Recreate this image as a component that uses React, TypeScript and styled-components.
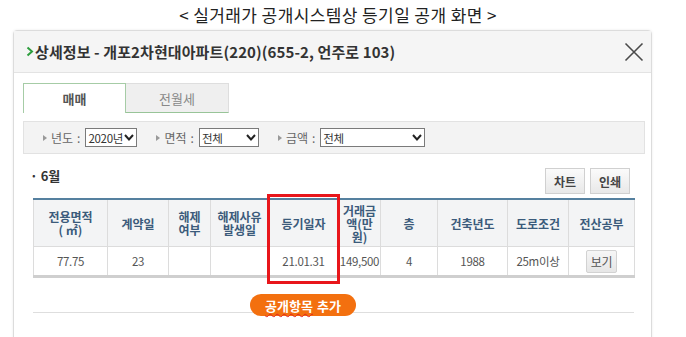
import React from 'react';
import styled, { createGlobalStyle } from 'styled-components';

const GlobalStyle = createGlobalStyle`
  html, body {
    margin: 0;
    padding: 0;
    background: #fff;
    overflow: hidden;
  }
  body {
    font-family: "Noto Sans CJK KR", "Noto Sans", sans-serif;
    color: #333;
  }
`;

const Page = styled.div`
  width: 686px;
  height: 337px;
  overflow: hidden;
`;

const Caption = styled.div`
  height: 30px;
  line-height: 30px;
  padding-right: 10px;
  text-align: center;
  font-size: 17px;
  letter-spacing: 0.4px;
  color: #222;
`;

const Dialog = styled.div`
  margin-left: 13px;
  width: 639px;
  box-sizing: border-box;
  border: 1px solid #dcdcdc;
  border-radius: 4px 4px 0 0;
  box-shadow: 0 0 3px rgba(0, 0, 0, 0.08);
  background: #fff;
`;

const Header = styled.div`
  height: 41px;
  display: flex;
  align-items: center;
  justify-content: space-between;
  padding: 0 7px 0 12px;
  background: #f5f5f5;
  border-bottom: 1px solid #e3e3e3;
`;

const Title = styled.div`
  display: flex;
  align-items: center;
  font-size: 15px;
  font-weight: 700;
  color: #333;
  letter-spacing: 0.1px;
  white-space: nowrap;
`;

const Body = styled.div`
  padding: 10px 6px 40px 9px;
`;

const Tabs = styled.div`
  display: flex;
  height: 30px;
`;

const Tab = styled.div<{ $active?: boolean }>`
  width: 103px;
  box-sizing: border-box;
  display: flex;
  align-items: center;
  justify-content: center;
  font-size: 13px;
  background: ${p => (p.$active ? '#fff' : '#efefef')};
  color: ${p => (p.$active ? '#555' : '#888')};
  font-weight: ${p => (p.$active ? 700 : 400)};
  border: 1px solid ${p => (p.$active ? '#a6cca6' : '#dedede')};
  border-bottom: ${p => (p.$active ? 'none' : '1px solid #98c498')};
  border-left: ${p => (p.$active ? '1px solid #a6cca6' : 'none')};
`;

const FilterBar = styled.div`
  margin-top: 8px;
  height: 33px;
  box-sizing: border-box;
  display: flex;
  align-items: center;
  padding-left: 19px;
  background: #f3f3f3;
  border: 1px solid #e2e2e2;
`;

const FilterItem = styled.div`
  display: flex;
  align-items: center;
  margin-right: 19px;
  font-size: 12px;
  color: #666;
`;

const FilterLabel = styled.span`
  display: flex;
  align-items: center;
  &::before {
    content: '';
    border-left: 4px solid #999;
    border-top: 3px solid transparent;
    border-bottom: 3px solid transparent;
    margin-right: 4px;
  }
`;

const Colon = styled.span`
  margin: 0 5px 0 4px;
`;

const SelectBox = styled.div<{ $w: number }>`
  width: ${p => p.$w}px;
  height: 19px;
  box-sizing: border-box;
  display: flex;
  align-items: center;
  justify-content: space-between;
  padding: 0 2px 0 2px;
  background: #fff;
  border: 1px solid #7a7a7a;
  font-size: 11.5px;
  letter-spacing: -0.3px;
  white-space: nowrap;
  color: #333;
`;

const Section = styled.div`
  padding: 0 11px 0 10px;
`;

const TopRow = styled.div`
  margin-top: 14px;
  display: flex;
  justify-content: space-between;
  align-items: flex-start;
`;

const Month = styled.div`
  margin-left: -3px;
  font-size: 13px;
  font-weight: 700;
  color: #333;
  line-height: 16px;
`;

const ButtonGroup = styled.div`
  display: flex;
  gap: 5px;
  margin-right: 4px;
`;

const SmallButton = styled.div`
  width: 40px;
  height: 26px;
  box-sizing: border-box;
  display: flex;
  align-items: center;
  justify-content: center;
  background: linear-gradient(#fbfbfb, #e8e8e8);
  border: 1px solid #d0d0d0;
  font-size: 12px;
  font-weight: 700;
  color: #444;
`;

const TableWrap = styled.div`
  position: relative;
  margin-top: 4px;
`;

const Table = styled.table`
  width: 601px;
  border-collapse: collapse;
  table-layout: fixed;
  border-top: 2px solid #55809f;
  border-bottom: 3px solid #cfcfcf;
`;

const Col = styled.col<{ $w: number }>`
  width: ${p => p.$w}px;
`;

const HeadCell = styled.th`
  height: 46px;
  padding: 0;
  background: #f3f4f5;
  border: 1px solid #dcdcdc;
  border-top: none;
  color: #3b5b7b;
  font-size: 12px;
  font-weight: 700;
  line-height: 13px;
  text-align: center;
`;

const Cell = styled.td`
  height: 28px;
  padding: 0;
  border: 1px solid #dcdcdc;
  border-bottom: none;
  color: #555;
  font-size: 11.5px;
  letter-spacing: -0.3px;
  text-align: center;
`;

const ViewButton = styled.div`
  margin: 0 auto;
  width: 31px;
  height: 23px;
  box-sizing: border-box;
  display: flex;
  align-items: center;
  justify-content: center;
  background: linear-gradient(#f6f6f6, #e6e6e6);
  border: 1px solid #d2d2d2;
  border-radius: 2px;
  font-size: 12px;
  color: #555;
`;

const Highlight = styled.div`
  position: absolute;
  left: 234px;
  top: -4px;
  width: 73px;
  height: 90px;
  box-sizing: border-box;
  border: 3px solid #e8161b;
  pointer-events: none;
`;

const Footer = styled.div`
  margin-top: 16px;
  height: 18px;
  padding-left: 217px;
  border-bottom: 1px solid #dedede;
`;

const OrangeButton = styled.div`
  position: relative;
  width: 106px;
  height: 22px;
  display: flex;
  align-items: center;
  justify-content: center;
  gap: 4px;
  border-radius: 11px;
  background: #f3700f;
  color: #fff;
  font-size: 13px;
  font-weight: 700;
`;

const Squiggle = styled.span`
  text-decoration: underline wavy #e02020;
  text-decoration-thickness: 1px;
  text-underline-offset: 2px;
`;

const Chevron = () => (
  <svg width="8" height="11" viewBox="0 0 8 11" style={{ marginRight: 1 }}>
    <polyline points="1.5,1.5 6,5.5 1.5,9.5" fill="none" stroke="#2e9e3e" strokeWidth="2" />
  </svg>
);

const CloseIcon = () => (
  <svg width="20" height="20" viewBox="0 0 20 20">
    <path d="M1.5 1.5 L18.5 18.5 M18.5 1.5 L1.5 18.5" stroke="#4a4a4a" strokeWidth="1.6" fill="none" />
  </svg>
);

const Arrow = () => (
  <svg width="10" height="7" viewBox="0 0 10 7">
    <polyline points="1,1 5,5.5 9,1" fill="none" stroke="#222" strokeWidth="2" />
  </svg>
);

const filters = [
  { label: '년도', value: '2020년', w: 52 },
  { label: '면적', value: '전체', w: 60 },
  { label: '금액', value: '전체', w: 105 },
];

const columns = [74, 61, 42, 58, 70, 42, 57, 70, 61, 66];

export default function App() {
  return (
    <Page>
      <GlobalStyle />
      <Caption>&lt; 실거래가 공개시스템상 등기일 공개 화면 &gt;</Caption>
      <Dialog>
        <Header>
          <Title>
            <Chevron />
            상세정보 - 개포2차현대아파트(220)(655-2, 언주로 103)
          </Title>
          <CloseIcon />
        </Header>
        <Body>
          <Tabs>
            <Tab $active>매매</Tab>
            <Tab>전월세</Tab>
          </Tabs>
          <FilterBar>
            {filters.map(f => (
              <FilterItem key={f.label}>
                <FilterLabel>{f.label}</FilterLabel>
                <Colon>:</Colon>
                <SelectBox $w={f.w}>
                  {f.value}
                  <Arrow />
                </SelectBox>
              </FilterItem>
            ))}
          </FilterBar>
          <Section>
            <TopRow>
              <Month>· 6월</Month>
              <ButtonGroup>
                <SmallButton>차트</SmallButton>
                <SmallButton>인쇄</SmallButton>
              </ButtonGroup>
            </TopRow>
            <TableWrap>
              <Table>
                <colgroup>
                  {columns.map((w, i) => (
                    <Col key={i} $w={w} />
                  ))}
                </colgroup>
                <thead>
                  <tr>
                    <HeadCell>
                      전용면적
                      <br />( ㎡)
                    </HeadCell>
                    <HeadCell>계약일</HeadCell>
                    <HeadCell>
                      해제
                      <br />
                      여부
                    </HeadCell>
                    <HeadCell>
                      해제사유
                      <br />
                      발생일
                    </HeadCell>
                    <HeadCell>등기일자</HeadCell>
                    <HeadCell>
                      거래금
                      <br />
                      액(만
                      <br />
                      원)
                    </HeadCell>
                    <HeadCell>층</HeadCell>
                    <HeadCell>건축년도</HeadCell>
                    <HeadCell>도로조건</HeadCell>
                    <HeadCell>전산공부</HeadCell>
                  </tr>
                </thead>
                <tbody>
                  <tr>
                    <Cell>77.75</Cell>
                    <Cell>23</Cell>
                    <Cell></Cell>
                    <Cell></Cell>
                    <Cell>21.01.31</Cell>
                    <Cell>149,500</Cell>
                    <Cell>4</Cell>
                    <Cell>1988</Cell>
                    <Cell>25m이상</Cell>
                    <Cell>
                      <ViewButton>보기</ViewButton>
                    </Cell>
                  </tr>
                </tbody>
              </Table>
              <Highlight />
            </TableWrap>
            <Footer>
              <OrangeButton>
                <Squiggle>공개항목</Squiggle>
                <span>추가</span>
              </OrangeButton>
            </Footer>
          </Section>
        </Body>
      </Dialog>
    </Page>
  );
}
